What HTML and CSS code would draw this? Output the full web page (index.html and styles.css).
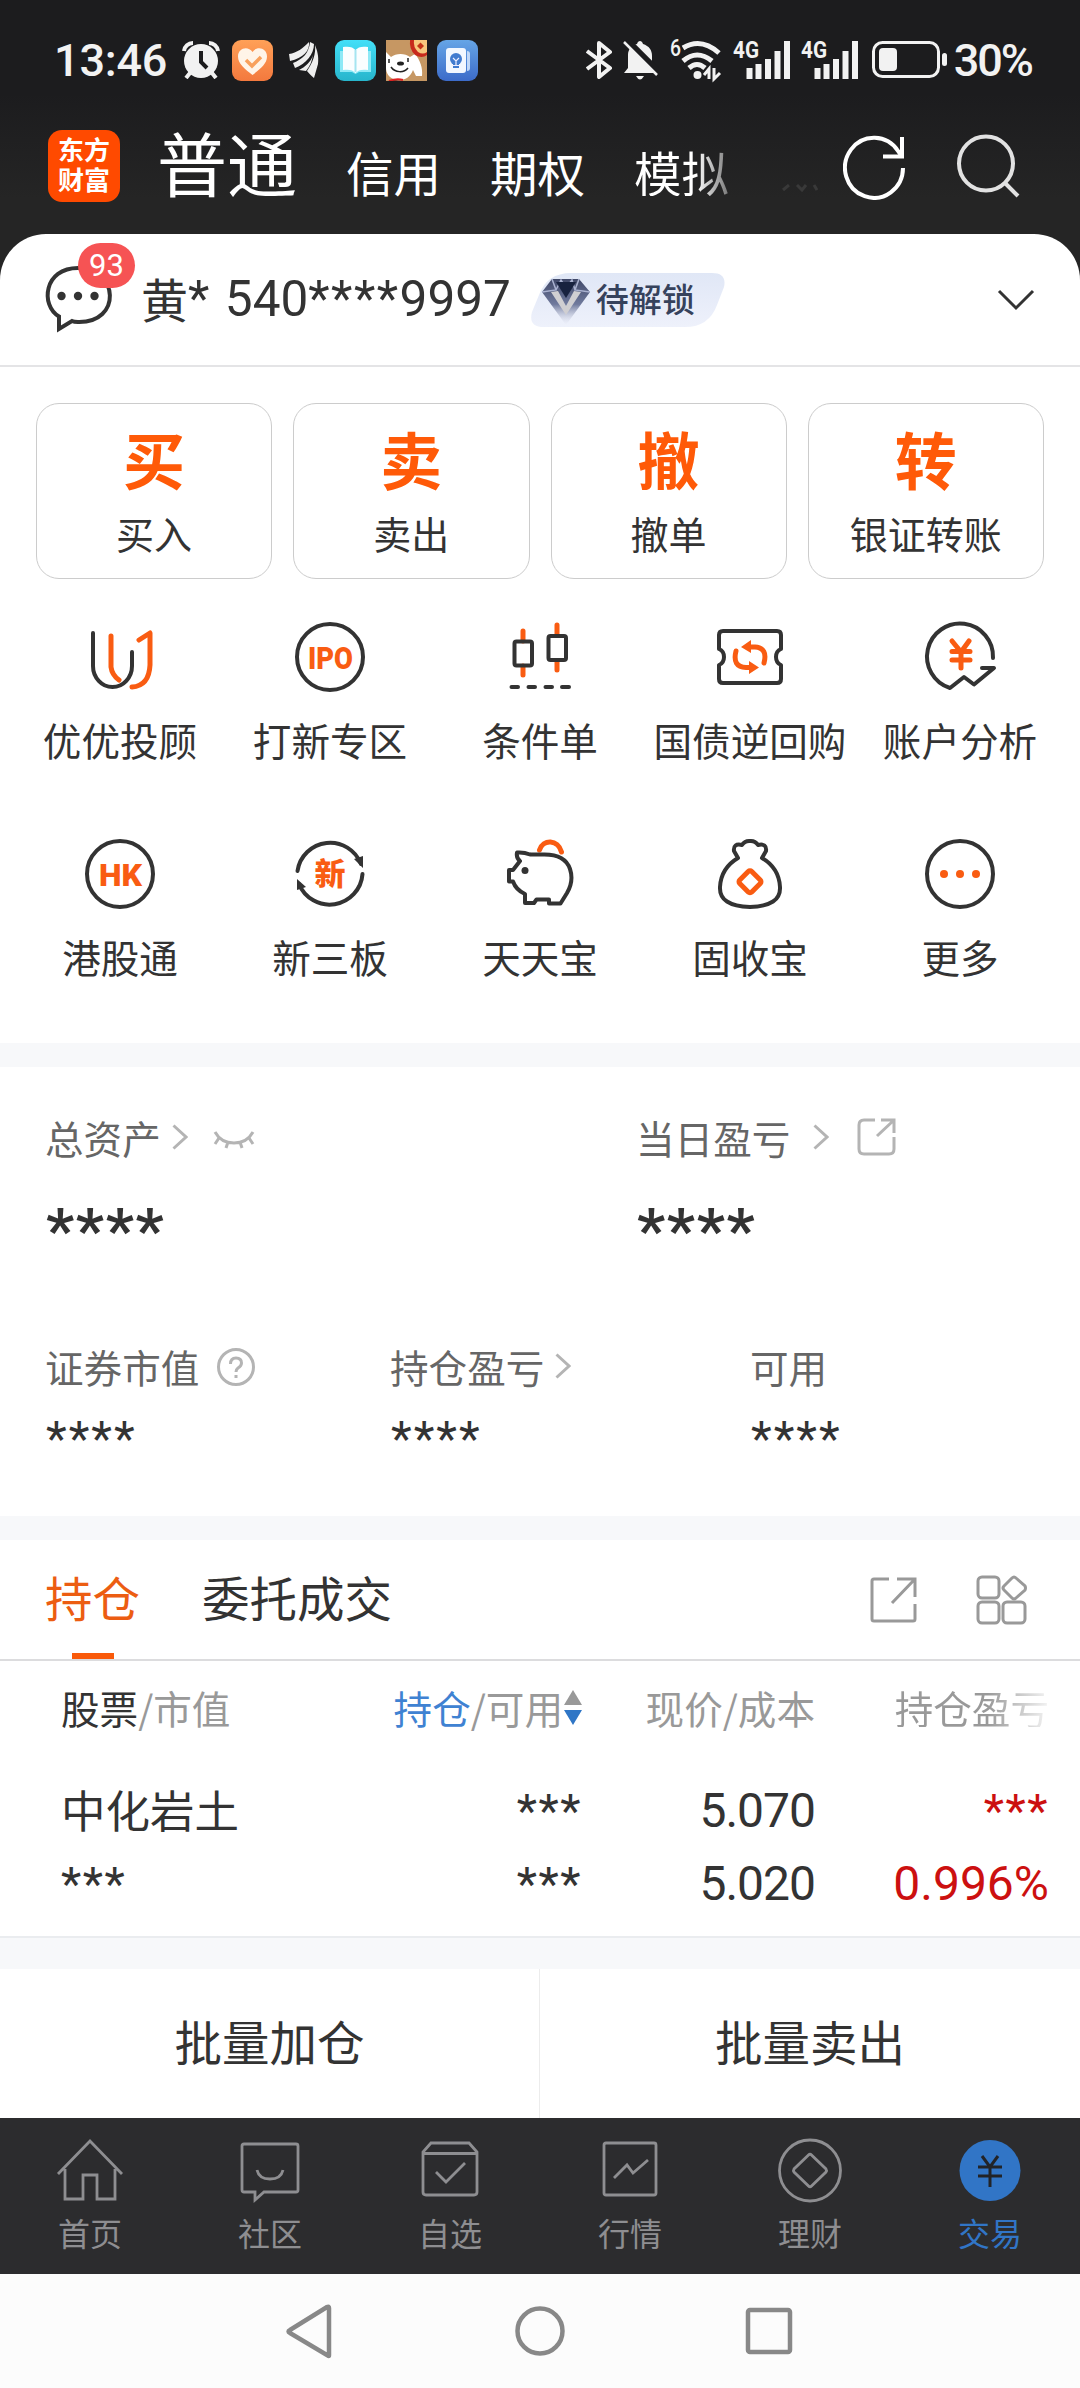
FILE: index.html
```html
<!DOCTYPE html>
<html lang="zh-CN">
<head>
<meta charset="utf-8">
<title>交易</title>
<link rel="stylesheet" href="styles.css">
</head>
<body>
<header class="top">
  <div class="status">
    <span class="clock">13:46</span>
    <svg class="st-alarm" width="38" height="38" viewBox="0 0 38 38"><circle cx="19" cy="20" r="17" fill="#f2f2f2"/><path d="M2 10A9 9 0 0 1 11 2M36 10A9 9 0 0 0 27 2" stroke="#f2f2f2" stroke-width="4" fill="none"/><path d="M8 32l-4 5M30 32l4 5" stroke="#f2f2f2" stroke-width="4"/><path d="M19 10v11l6 6" stroke="#1c1c1e" stroke-width="4" fill="none"/></svg>
    <svg class="st-app" width="41" height="41" viewBox="0 0 41 41"><defs><linearGradient id="og" x2="0" y2="1"><stop stop-color="#ffa057"/><stop offset="1" stop-color="#f3793e"/></linearGradient></defs><rect width="41" height="41" rx="9" fill="url(#og)"/><path d="M20.500 35C13 29 6 24 6 16.500C6 8 16 5.500 20.500 12C25 5.500 35 8 35 16.500C35 24 28 29 20.500 35Z" fill="#fff4e8"/><path d="M14 20l6 6 9-9" fill="none" stroke="#f8a05c" stroke-width="3.500"/></svg>
    <svg class="st-wing" width="30" height="36" viewBox="0 0 30 36"><path d="M0 12C8 11 14 6 20 0C21 9 14 16 1 19ZM21 0L25 2C25 12 17 22 6 26L4 21C14 17 20 11 21 0ZM26 3C28 8 30 14 29 22L25 36C22 34 20 31 18 29C24 20 27 12 26 3ZM24 13C22 20 16 25 10 28L17 29C21 24 23 19 24 13Z" fill="#eee"/></svg>
    <svg class="st-app" width="41" height="41" viewBox="0 0 41 41"><defs><linearGradient id="cg" x2="0" y2="1"><stop stop-color="#43dff8"/><stop offset="1" stop-color="#27b5cc"/></linearGradient></defs><rect width="41" height="41" rx="9" fill="url(#cg)"/><path d="M5 11h31v21H24l-3.500 2L17 32H5Z" fill="#8ee9f6"/><path d="M8 7c6-1 10 0 12.500 3C23 7 27 6 33 7v23c-6-1-10 0-12.500 3C18 30 14 29 8 30Z" fill="#fafeff"/><path d="M20.500 10v22" stroke="#a5e5f0" stroke-width="2"/></svg>
    <svg class="st-app" width="41" height="41" viewBox="0 0 41 41"><rect width="41" height="41" fill="#c69763"/><path d="M0 12l5 5C10 13 19 13 24 17L29 14C34 20 37 28 36 36L30 36L27 30C24 38 18 41 10 40C3 38 0 33 0 28Z" fill="#fff"/><path d="M24 0H41V15Q36 19 29 15Q23 9 24 0Z" fill="#c82a1c"/><path d="M28 0H41V12Q37 15 32 12Q27 7 28 0Z" fill="#f8c77d"/><path d="M34.500 2.500l3.500 3.500-3.500 3.500-3.500-3.500Z" fill="#c33418"/><ellipse cx="14.500" cy="23.500" rx="3.500" ry="2" fill="#222"/><path d="M5 27c4 6 13 6 17 1M3 19v4M22 18v4" stroke="#222" stroke-width="1.500" fill="none"/><path d="M3 41q8-3 14-1" stroke="#d22" stroke-width="2"/></svg>
    <svg class="st-app" width="41" height="41" viewBox="0 0 41 41"><defs><linearGradient id="bg" x2="0" y2="1"><stop stop-color="#66a5e6"/><stop offset="1" stop-color="#3c6bc9"/></linearGradient></defs><rect width="41" height="41" rx="9" fill="url(#bg)"/><rect x="9" y="8" width="20" height="25" rx="3" fill="#f2f7ff"/><path d="M30 11q3 0 3 3v14q0 3-3 3" fill="#c1d8f8"/><circle cx="19" cy="19" r="6" fill="#417bcf"/><path d="M16 23h6v5h-6Z" fill="#417bcf"/><path d="M16 18l3 3 3-3M19 21v4M15.500 25.500h7" stroke="#eef" stroke-width="1.200" fill="none"/></svg>
    <div class="status-right">
      <svg class="st-bt" width="27" height="38" viewBox="0 0 27 38" fill="none" stroke="#f2f2f2" stroke-width="4"><path d="M1 10L24 27L13 36V2L24 11L1 28" stroke-linejoin="round"/></svg>
      <svg class="st-bell" width="36" height="40" viewBox="0 0 36 40"><path d="M1 33L5 28V15C5 9 9 5 14 4C15 0 19 0 20 4C26 6 29 10 29 16V27L32 33Z" fill="#f2f2f2"/><path d="M13 36h8q-4 7-8 0Z" fill="#f2f2f2"/><path d="M4 0L37 33" stroke="#1c1c1e" stroke-width="6"/><path d="M1 2L34 35" stroke="#f2f2f2" stroke-width="2.500"/></svg>
      <svg class="st-wifi" width="52" height="58" viewBox="0 -8 52 58" fill="none" stroke="#f2f2f2"><text x="0" y="17" font-family="Roboto" font-weight="500" font-size="23" textLength="11" lengthAdjust="spacingAndGlyphs" fill="#f2f2f2" stroke="none">6</text><path d="M13 9Q31-2 49 14M13 22Q27 10 42 22M19 29Q27 22 35 29" stroke-width="5"/><circle cx="27.500" cy="36" r="4" fill="#f2f2f2" stroke="none"/><path d="M39 40V30l-5 6M44 29v11l6-6" stroke-width="3"/></svg>
      <svg class="st-sig" width="57" height="56" viewBox="0 -8 57 56"><text x="0" y="18" font-family="Roboto" font-weight="700" font-size="24" textLength="26" lengthAdjust="spacingAndGlyphs" fill="#f2f2f2">4G</text><path d="M16.500 39V28M25.500 39V24M35 39V19M44.500 39V11M54 39V1" stroke="#f2f2f2" stroke-width="6"/></svg>
      <svg class="st-sig" width="57" height="56" viewBox="0 -8 57 56"><text x="0" y="18" font-family="Roboto" font-weight="700" font-size="24" textLength="26" lengthAdjust="spacingAndGlyphs" fill="#f2f2f2">4G</text><path d="M16.500 39V28M25.500 39V24M35 39V19M44.500 39V11M54 39V1" stroke="#f2f2f2" stroke-width="6"/></svg>
      <svg class="st-bat" width="76" height="38" viewBox="0 0 76 38"><rect x="1.500" y="1.500" width="65" height="34" rx="9" fill="none" stroke="#f2f2f2" stroke-width="3"/><rect x="7" y="7" width="18" height="23" rx="4" fill="#f2f2f2"/><rect x="70" y="12" width="5" height="13" rx="2.500" fill="#f2f2f2"/></svg>
      <span class="pct">30%</span>
    </div>
  </div>
  <div class="modes">
    <div class="logo">东方<br>财富</div>
    <nav class="mode-list">
      <span class="mode mode-on">普通</span>
      <span class="mode">信用</span>
      <span class="mode">期权</span>
      <span class="mode mode-fade">模拟</span>
      <svg class="more-hint" width="36" height="8" viewBox="0 0 36 8" fill="none" stroke="#393939" stroke-width="3"><path d="M1 6L7 1M15 1L20 6L24 1M32 1L35 6"/></svg>
    </nav>
    <svg class="ic-refresh" width="64" height="66" viewBox="0 0 64 66" fill="none" stroke="#fff" stroke-width="4"><path d="M60 34A29 30 0 1 1 55 17L58.500 22"/><path d="M59 3V22.500H40"/></svg>
    <svg class="ic-search" width="64" height="66" viewBox="0 0 64 66" fill="none" stroke="#e2e2e2" stroke-width="4"><circle cx="29" cy="29.500" r="27"/><path d="M48 49L61 62"/></svg>
  </div>
</header>

<main class="sheet">
  <section class="account">
    <div class="chat">
      <svg width="70" height="70" viewBox="0 0 70 70"><path d="M15 64V51.500C-4 40 0 3 34 3C75 3 78 58 34 57C31 57 29 56.500 28 56Z" fill="none" stroke="#333" stroke-width="4"/><circle cx="17.500" cy="31" r="4.200" fill="#333"/><circle cx="34" cy="31" r="4.200" fill="#333"/><circle cx="50.500" cy="31" r="4.200" fill="#333"/></svg>
      <span class="count">93</span>
    </div>
    <div class="holder"><span class="surname">黄</span><span class="star">*</span><span class="digits lead">540</span><span class="star">****</span><span class="digits">9997</span></div>
    <div class="level">
      <svg class="level-bg" width="194" height="54" viewBox="0 0 194 54"><defs><linearGradient id="lv" x2="0" y2="1"><stop stop-color="#e0e7f6"/><stop offset="1" stop-color="#eef1fb"/></linearGradient><linearGradient id="dm" x2="0" y2="1"><stop stop-color="#404868"/><stop offset=".55" stop-color="#707a9d"/><stop offset="1" stop-color="#eef0fa" stop-opacity=".2"/></linearGradient></defs><path d="M40 0H181Q196 0 193 14L186 32Q178 54 154 54H13Q-3 54 1 39L8 22Q16 0 40 0Z" fill="url(#lv)"/><path d="M21 6H48L59 19L35 52L11 19Z" fill="url(#dm)"/><path d="M21 6L25 17L11 19M48 6L44 17L59 19M25 17L30 7L35 15L41 7L44 17" fill="none" stroke="#aab2d0" stroke-width="1.500"/><path d="M25 9H45L35 25Z" fill="#18223f"/><path d="M20 19L27 18L35 33L43 18L50 19L35 42Z" fill="#d0cfd2"/></svg>
      <span class="level-name">待解锁</span>
    </div>
    <svg class="ic-down" width="38" height="24" viewBox="0 0 38 24" fill="none" stroke="#333" stroke-width="3"><path d="M2 3L19 20L36 3"/></svg>
  </section>

  <section class="trade">
    <div class="card"><b>买</b><span>买入</span></div>
    <div class="card"><b>卖</b><span>卖出</span></div>
    <div class="card"><b>撤</b><span>撤单</span></div>
    <div class="card"><b>转</b><span>银证转账</span></div>
  </section>

  <section class="tools">
    <div class="tool"><svg viewBox="0 0 80 80"><path class="k" d="M13 16V49A19.500 21 0 0 0 52 49V35"/><path class="o" d="M31 19V50Q32 58 39 63M59 23L70 16V48Q69 69 52 70"/></svg><span>优优投顾</span></div>
    <div class="tool"><svg viewBox="0 0 80 80"><circle class="k" cx="40" cy="40" r="33"/><text class="glyph" x="18" y="51.500" textLength="45" lengthAdjust="spacingAndGlyphs">IPO</text></svg><span>打新专区</span></div>
    <div class="tool"><svg viewBox="0 0 80 80"><path class="o" d="M23 14V24M23 49V58M57 8V18M57 44V53"/><rect class="k" x="14.500" y="24.500" width="17.500" height="24" rx="2"/><rect class="k" x="48.500" y="19" width="17.500" height="24" rx="2"/><path class="k" d="M11.500 70H18M28.500 70H35M45.500 70H52M62 70H69"/></svg><span>条件单</span></div>
    <div class="tool"><svg viewBox="0 0 80 80"><path class="k" d="M13 14H67Q71 14 71 18V32Q66 34 66 40Q66 46 71 48V62Q71 66 67 66H13Q9 66 9 62V48Q14 46 14 40Q14 34 9 32V18Q9 14 13 14Z"/><path class="o" d="M38 30H45Q58 31 54 46M26 34Q22 50 36 50.500H42"/><path class="of" d="M31 30L41 23V36ZM49 50.500L39 44V57Z"/></svg><span>国债逆回购</span></div>
    <div class="tool"><svg viewBox="0 0 80 80"><path class="k" d="M73 41A33 33 0 1 0 30 71L44 60L54 67.500L74 51H62"/><path class="o" d="M32 24L41 35L49 24M41 35V51M32 34.500H50M32 43H50"/></svg><span>账户分析</span></div>
    <div class="tool"><svg viewBox="0 0 80 80"><circle class="k" cx="40" cy="40" r="33"/><text class="glyph" x="19" y="51.500" textLength="43" lengthAdjust="spacingAndGlyphs">HK</text></svg><span>港股通</span></div>
    <div class="tool"><svg viewBox="0 0 80 80"><path class="k" d="M7.500 37A33 33 0 0 1 71 30M72.500 40A33 33 0 0 1 9 50"/><path class="kf" d="M64 25L73 22V34ZM7 45L16 53L7 56Z"/><text class="glyph-cn" x="24.500" y="51">新</text></svg><span>新三板</span></div>
    <div class="tool"><svg viewBox="0 0 80 80"><path class="o" d="M39.500 16C43 5 58 5 61.500 18"/><path class="k" d="M17 18.500Q24 18 30 20.500H43Q65 20 70 35Q74 47 67 59L60.500 69.500H49V65.500H36.500L34 69H25V60Q16 56 13 47.500H9V36H13L20 27Q16 24 17 18.500Z"/><circle class="kf" cx="25" cy="36.500" r="3.500"/></svg><span>天天宝</span></div>
    <div class="tool"><svg viewBox="0 0 80 80"><path class="k" d="M28 24L24 17Q23 9 32 11Q35 6.500 40 7Q45 6.500 48 11Q57 9 56 17L52 24Q69 34 70 53Q71 72 40 73Q9 72 10 53Q11 34 28 24Z"/><rect class="o" x="31.500" y="39.200" width="17" height="17" rx="2.500" transform="rotate(45 40 47.700)"/></svg><span>固收宝</span></div>
    <div class="tool"><svg viewBox="0 0 80 80"><circle class="k" cx="40" cy="40" r="33"/><circle class="of" cx="24" cy="40" r="4"/><circle class="of" cx="40" cy="40" r="4"/><circle class="of" cx="56" cy="40" r="4"/></svg><span>更多</span></div>
  </section>

  <section class="assets">
    <div class="asset-row major">
      <div class="asset">
        <div class="label">总资产<svg class="chev" viewBox="0 0 16 26"><path d="M1.500 1.500L14 13L1.500 24.500"/></svg><svg class="eye" width="42" height="22" viewBox="0 0 42 22"><path d="M2 3Q8 14 21 14Q34 14 40 3M6 9L2 15M15 13L13 19M27 13L29 19M36 9L40 15"/></svg></div>
        <div class="mask big">****</div>
      </div>
      <div class="asset">
        <div class="label">当日盈亏<svg class="chev wide" viewBox="0 0 16 26"><path d="M1.500 1.500L14 13L1.500 24.500"/></svg><svg class="share" width="40" height="40" viewBox="0 0 40 40"><path d="M18 3H7Q2 3 2 8V32Q2 37 7 37H32Q37 37 37 32V20M24 3H37V16M36 4L20 19"/></svg></div>
        <div class="mask big">****</div>
      </div>
    </div>
    <div class="asset-row minor">
      <div class="asset">
        <div class="label">证券市值<svg class="help" width="40" height="40" viewBox="0 0 40 40"><circle cx="20" cy="20" r="17.500"/><path d="M14.500 17Q14.500 11 20 11Q25.500 11 25.500 16Q25.500 19 22 21Q20 22.500 20 25M20 28V31"/></svg></div>
        <div class="mask">****</div>
      </div>
      <div class="asset">
        <div class="label">持仓盈亏<svg class="chev" viewBox="0 0 16 26"><path d="M1.500 1.500L14 13L1.500 24.500"/></svg></div>
        <div class="mask">****</div>
      </div>
      <div class="asset">
        <div class="label">可用</div>
        <div class="mask">****</div>
      </div>
    </div>
  </section>

  <section class="tabs">
    <span class="tab tab-on">持仓</span>
    <span class="tab">委托成交</span>
    <svg class="ic-export" width="48" height="48" viewBox="0 0 48 48" fill="none" stroke="#999" stroke-width="3"><path d="M19 3H4Q2 3 2 5V43Q2 45 4 45H43Q45 45 45 43V28M27 3H45V21M44 4L22 27"/></svg>
    <svg width="52" height="50" viewBox="0 0 52 50" fill="none" stroke="#999" stroke-width="3"><rect x="2" y="2" width="21" height="21" rx="4"/><rect x="2" y="27" width="21" height="21" rx="4"/><rect x="27" y="27" width="22" height="21" rx="4"/><path d="M36 3Q38 1 40 3L49 11Q50 13 49 15L40 23Q38 25 36 23L28 15Q26 13 28 11Z"/></svg>
  </section>

  <section class="table">
    <div class="thead">
      <span><em class="dark">股票</em>/市值</span>
      <span class="sorted"><em class="blue">持仓</em>/可用<svg width="18" height="36" viewBox="0 0 18 36"><path d="M9 0L18 15H0Z" fill="#999"/><path d="M9 35L18 20H0Z" fill="#2f76c6"/></svg></span>
      <span>现价/成本</span>
      <span class="cut">持仓盈亏</span>
    </div>
    <div class="line first"><span class="stock">中化岩土</span><span class="mask">***</span><span class="num">5.070</span><span class="mask red">***</span></div>
    <div class="line"><span class="mask">***</span><span class="mask">***</span><span class="num">5.020</span><span class="num ratio red">0.996%</span></div>
  </section>

  <section class="batch"><span>批量加仓</span><span>批量卖出</span></section>
</main>

<nav class="bottom">
  <div class="item"><svg viewBox="0 0 70 70"><path d="M3 38L35 5L67 38M10 33V63H28V39H42V63H60V33"/></svg><span>首页</span></div>
  <div class="item"><svg viewBox="0 0 70 70"><path d="M9 8H61Q63 8 63 10V54Q63 56 61 56H29L20 64V56H9Q7 56 7 54V10Q7 8 9 8ZM22 34Q24 43 35 43Q46 43 48 34"/></svg><span>社区</span></div>
  <div class="item"><svg viewBox="0 0 70 70"><path d="M16 7H54L62 16V56Q62 59 59 59H11Q8 59 8 56V16ZM8 17.500H62M21 36L31 46L50 27"/></svg><span>自选</span></div>
  <div class="item"><svg viewBox="0 0 70 70"><path d="M11 7H59Q61 7 61 9V57Q61 59 59 59H11Q9 59 9 57V9Q9 7 11 7ZM19 42L32 29L38 37L53 24"/></svg><span>行情</span></div>
  <div class="item"><svg viewBox="0 0 70 70"><circle cx="35" cy="34.500" r="30.500"/><path d="M33.500 19Q35 17.500 36.500 19L51 33Q52 34.500 51 36L36.500 50Q35 51.500 33.500 50L19 36Q18 34.500 19 33Z"/></svg><span>理财</span></div>
  <div class="item on"><svg viewBox="0 0 70 70"><circle class="disc" cx="35" cy="34.500" r="30.500"/><path class="yen" d="M27 20L35 31L43 20M35 31V51M23 31H47M23 40H47"/></svg><span>交易</span></div>
</nav>
<footer class="system">
  <svg viewBox="0 0 60 60"><path d="M48 7V54Q48 56 46 54L9 32Q6 30.500 9 29L46 6Q48 5 48 7Z"/></svg>
  <svg viewBox="0 0 60 60"><circle cx="30" cy="30" r="22.500"/></svg>
  <svg viewBox="0 0 60 60"><rect x="9" y="9" width="42" height="42" rx="2"/></svg>
</footer>
</body>
</html>
```
FILE: styles.css
```css
* { box-sizing: border-box; }
body {
  margin: 0;
  width: 1080px;
  height: 2388px;
  overflow: hidden;
  display: flex;
  flex-direction: column;
  background: #252525;
  color: #333;
  font-family: "Noto Sans CJK SC", "Noto Sans", sans-serif;
  line-height: 1;
}
svg { display: block; flex: none; }
span, b { white-space: nowrap; }

.top {
  height: 234px;
  flex: none;
  background: linear-gradient(#1c1c1e 40%, #252525 85%);
}
.status {
  height: 118px;
  padding: 2px 47px 0 54px;
  display: flex;
  align-items: center;
  color: #f2f2f2;
}
.clock, .pct { font-family: Roboto, sans-serif; font-weight: 500; font-size: 45px; }
.clock { width: 128px; letter-spacing: -0.2px; }
.st-app { margin-left: 10px; }
.st-wing { margin: 0 6px 0 16px; }
.st-alarm { margin-right: 2px; }
.status-right { margin-left: auto; display: flex; align-items: center; }
.st-bell { margin-left: 10px; }
.st-wifi { margin-left: 11px; }
.st-sig { margin-left: 11px; }
.st-bat { margin: 0 6px 0 14px; }
.pct { letter-spacing: -2px; margin-right: 1px; }

.modes { height: 116px; display: flex; padding: 12px 57px 0 48px; }
.logo {
  width: 72px;
  height: 72px;
  border-radius: 14px;
  background: #ff4a00;
  color: #fff;
  font-size: 26px;
  font-weight: 700;
  line-height: 30px;
  text-align: center;
  padding-top: 4px;
}
.mode-list { display: flex; align-items: baseline; width: 740px; margin: -3px 0 0 37px; }
.mode { font-size: 47.500px; color: #fff; margin-right: 49px; }
.mode-on { font-size: 70px; }
.mode-fade {
  color: transparent;
  background: linear-gradient(90deg, #fff 65%, #777);
  -webkit-background-clip: text;
  background-clip: text;
}
.more-hint { margin-left: 4px; }
.ic-refresh { margin: 4px 0 0 -54px; }
.ic-search { margin: 4px 0 0 50px; }

.sheet {
  height: 1884px;
  flex: none;
  background: #fff;
  border-radius: 46px 46px 0 0;
}
.account {
  height: 133px;
  border-bottom: 2px solid #e4e4e6;
  display: flex;
  align-items: center;
  padding: 0 45px 0 44px;
}
.chat { position: relative; width: 97px; height: 70px; }
.count {
  position: absolute;
  left: 34px;
  top: -22px;
  width: 57px;
  height: 45px;
  border-radius: 23px;
  background: #f65354;
  color: #fff;
  font: 31px/46px Roboto, sans-serif;
  text-align: center;
}
.holder { display: flex; align-items: center; height: 50px; font-size: 47px; }
.surname { margin-top: -5px; }
.star, .digits { font-family: Roboto, sans-serif; font-size: 49.500px; }
.star { letter-spacing: 1.5px; }
.lead { margin-left: 14px; }
.level { position: relative; width: 194px; height: 54px; margin-left: 20px; }
.level-bg { position: absolute; inset: 0; }
.level-name { position: absolute; left: 65px; top: 9px; font-size: 33px; font-weight: 500; color: #36425c; }
.ic-down { margin-left: auto; }

.trade {
  display: grid;
  grid-template-columns: repeat(4, 1fr);
  gap: 21px;
  padding: 36px 36px 0;
}
.card {
  height: 176px;
  border: 1.500px solid #ccc;
  border-radius: 23px;
  display: flex;
  flex-direction: column;
  align-items: center;
}
.card b { font-size: 62px; font-weight: 700; color: #ff5a08; margin-top: 23px; }
.card span { font-size: 38px; margin-top: 25px; }

.tools {
  display: grid;
  grid-template-columns: repeat(5, 210px);
  grid-auto-rows: 217px;
  padding: 38px 15px 0;
  height: 464px;
}
.tool { display: flex; flex-direction: column; align-items: center; font-size: 38.600px; }
.tool svg { width: 80px; height: 80px; }
.tool span { margin-top: 23px; }
.k, .o { fill: none; stroke: #333; stroke-width: 4; stroke-linejoin: round; stroke-linecap: round; }
.o { stroke: #f95c12; stroke-width: 5; }
.kf { fill: #333; }
.of { fill: #f95c12; }
.glyph { font: 900 32px Roboto, sans-serif; fill: #f95c12; }
.glyph-cn { font: 900 31px "Noto Sans CJK SC", sans-serif; fill: #f95c12; }

.assets { height: 497px; border-top: 24px solid #f7f8fa; border-bottom: 24px solid #f7f8fa; }
.asset-row { display: grid; padding-left: 45px; }
.major { grid-template-columns: 591px 1fr; padding-top: 50px; height: 229px; }
.minor { grid-template-columns: 345px 360px 1fr; padding-top: 50px; }
.label { height: 40px; display: flex; align-items: center; font-size: 38.600px; color: #666; }
.label svg { fill: none; stroke: #b4b4b4; stroke-width: 3; }
.chev { width: 16px; height: 26px; margin-left: 11px; }
.wide { margin-left: 23px; }
.eye { margin: 6px 0 0 25px; }
.share { margin-left: 28px; }
.help { margin: 2px 0 0 17px; }
.mask { font-family: Roboto, sans-serif; font-size: 48px; letter-spacing: 2px; }
.asset .mask { margin: 29px 0 0 1px; }
.asset .big { font-size: 62px; font-weight: 700; letter-spacing: 1.7px; margin-top: 43px; }

.tabs {
  height: 121px;
  border-bottom: 2px solid #dcdcde;
  display: flex;
  align-items: center;
  padding: 0 52px 0 45px;
}
.tab { font-size: 47.500px; margin-right: 62px; height: 119px; line-height: 114px; }
.tab-on {
  color: #ec5d12;
  background: linear-gradient(#f95a0a, #f95a0a) center bottom / 42px 6px no-repeat;
}
.ic-export { margin: 0 58px 0 auto; }

.table { height: 277px; border-bottom: 2px solid #eaecef; padding: 0 31px 0 61px; }
.thead, .line { display: grid; grid-template-columns: 200px 321px 233px 1fr; align-items: center; }
.thead > *, .line > * { justify-self: end; }
.thead > :first-child, .line > :first-child { justify-self: start; }
.thead { height: 93px; font-size: 38.600px; color: #999; }
.thead em { font-style: normal; }
.dark { color: #333; }
.blue { color: #3f82d2; }
.sorted { display: flex; align-items: center; }
.sorted svg { margin-left: 1px; }
.cut {
  color: transparent;
  background: linear-gradient(90deg, #999 60%, #f4f4f4);
  -webkit-background-clip: text;
  background-clip: text;
}
.line { height: 73px; }
.line .mask { font-size: 47px; letter-spacing: 1.5px; }
.first { margin-top: 20px; }
.stock { font-size: 44.500px; margin-top: -3px; }
.num { font-family: Roboto, sans-serif; font-size: 48px; letter-spacing: -1px; }
.ratio { letter-spacing: 0; }
.red { color: #cc1010; }

.batch {
  height: 181px;
  border-top: 31px solid #f7f8fa;
  display: grid;
  grid-template-columns: 1fr 1fr;
  line-height: 144px;
  text-align: center;
  font-size: 47.500px;
}
.batch span:first-child { border-right: 1px solid #ececec; }

.bottom { height: 156px; flex: none; background: #2c2c2e; display: grid; grid-template-columns: repeat(6, 1fr); }
.item { display: flex; flex-direction: column; align-items: center; padding-top: 18px; font-size: 32px; color: #8e8e91; }
.item svg { width: 70px; height: 70px; fill: none; stroke: currentColor; stroke-width: 2.800px; }
.item span { margin-top: 10px; }
.on { color: #3175c6; }
.item .disc { fill: #3175c6; stroke: none; }
.item .yen { stroke: #222428; stroke-width: 3px; }

.system {
  height: 114px;
  flex: none;
  background: #fcfcfc;
  display: flex;
  justify-content: center;
  align-items: center;
  gap: 169px;
}
.system svg { width: 60px; height: 60px; fill: none; stroke: #888; stroke-width: 4.500px; }
```
